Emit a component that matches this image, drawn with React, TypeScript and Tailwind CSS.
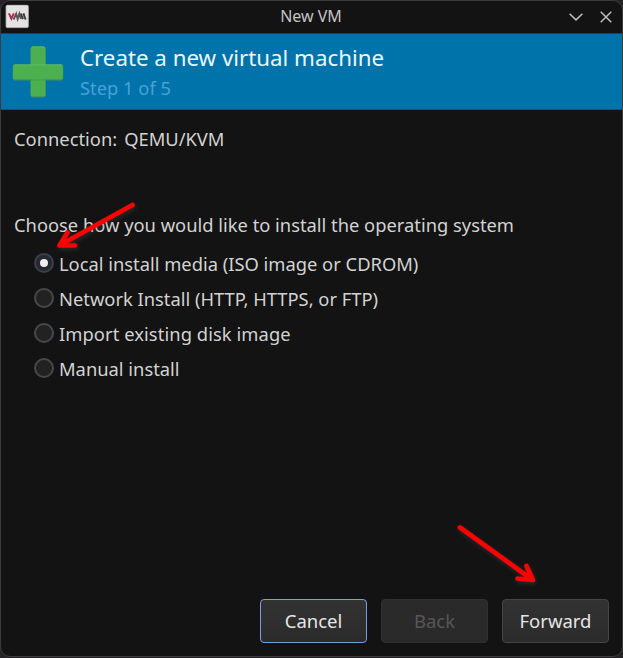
const options = [
  { label: "Local install media (ISO image or CDROM)", checked: true, tracking: "" },
  { label: "Network Install (HTTP, HTTPS, or FTP)", checked: false, tracking: "" },
  { label: "Import existing disk image", checked: false, tracking: "tracking-[0.08px]" },
  { label: "Manual install", checked: false, tracking: "" },
];

function VmLogo() {
  return (
    <svg width="24" height="24" viewBox="0 0 24 24" className="block">
      <rect x="1" y="0.6" width="22.4" height="22.6" rx="1.5" fill="#e4e2e3" stroke="#aaa8a9" strokeWidth="0.8" />
      <path d="M3.9 8.8 6.4 14.2 8.8 8.8" fill="none" stroke="#b52a50" strokeWidth="2" />
      <path d="M8.6 15 11.2 9.2 12.6 14.4 14.4 9.2 16 14.6" fill="none" stroke="#5a565b" strokeWidth="1.9" />
      <path d="M15.8 9 18 14.6M18.4 8.8 20.6 15" fill="none" stroke="#3f3c42" strokeWidth="2" />
    </svg>
  );
}

function PlusIcon() {
  return (
    <svg width="52" height="53" viewBox="0 0 52 53" className="block">
      <rect x="18.6" y="1.8" width="15" height="50" rx="2.2" fill="#35836f" />
      <rect x="0.8" y="19.5" width="50.3" height="15.3" rx="2.2" fill="#35836f" />
      <rect x="18.6" y="0.6" width="15" height="50" rx="2.2" fill="#4caf50" />
      <rect x="0.8" y="18.4" width="50.3" height="15.2" rx="2.2" fill="#4caf50" />
      <path d="M2 18.9H50M20 1H32.2" stroke="#62bb66" strokeWidth="0.9" />
      <path d="M18.6 34H33.6" stroke="#41984a" strokeWidth="0.9" />
    </svg>
  );
}

function Radio({ label, checked, tracking }: { label: string; checked: boolean; tracking: string }) {
  return (
    <label className="flex h-[35px] items-center">
      <span
        className={
          checked
            ? "flex size-[20px] items-center justify-center rounded-full border-2 border-[#3a404c] bg-[#252830]"
            : "size-[20px] rounded-full border-2 border-[#484848] bg-[#222222]"
        }
      >
        {checked && <span className="size-2 rounded-full bg-[#eeeeee]" />}
      </span>
      <span className={`ml-[5px] whitespace-nowrap pt-[2px] ${tracking}`}>{label}</span>
    </label>
  );
}

export default function App() {
  return (
    <div className="relative h-[658px] w-[623px] overflow-hidden bg-[#252326] font-['Noto_Sans',sans-serif] text-[18.34px] leading-[26px] text-[#d2d2d2]">
      <div className="flex h-[657px] w-[623px] flex-col overflow-hidden rounded-[10px] border border-[#3c3c3c] bg-[#131313]">
        <header className="flex h-[33px] shrink-0 items-center border-b border-[#3a3a3a] pl-1">
          <div className="w-[100px] -translate-y-[0.5px]"><VmLogo /></div>
          <div className="flex-1 pr-[7px] pb-[3px] text-center text-[16px] text-[#c4c4c4]">New VM</div>
          <div className="flex w-[98px] items-center justify-end gap-[17px] pr-[10px]">
            <svg width="14" height="8" viewBox="0 0 14 8" fill="none" stroke="#bdbdbd" strokeWidth="1.5"><path d="m.6.7 6.4 6.2L13.4.7" /></svg>
            <svg width="12" height="12" viewBox="0 0 12 12" fill="none" stroke="#bdbdbd" strokeWidth="1.5"><path d="m.7.7 10.6 10.6M11.3.7.7 11.3" /></svg>
          </div>
        </header>
        <section className="flex h-[76px] shrink-0 border-b border-[#454545] bg-[#0073aa] pl-[11px] pt-[12px]">
          <PlusIcon />
          <div className="ml-4 -mt-[4px]">
            <h1 className="h-[31px] whitespace-nowrap text-[22.3px] leading-[31px] text-[#edf5f9]">Create a new virtual machine</h1>
            <p className="h-[29px] leading-[29px] text-[#49a2d7]">Step 1 of 5</p>
          </div>
        </section>
        <main className="flex-1 pl-[13px] pt-[16px]">
          <p className="flex h-[26px] gap-[7px]"><span>Connection:</span><span>QEMU/KVM</span></p>
          <p className="mt-[60px] whitespace-nowrap">Choose how you would like to install the operating system</p>
          <div className="mt-[7px] pl-[20px]">
            {options.map((option) => <Radio key={option.label} {...option} />)}
          </div>
        </main>
        <footer className="flex h-[57px] shrink-0 items-start justify-end gap-[14px] pr-[13px]">
          <button className="h-[44px] w-[107px] rounded-[4px] border border-[#7a9fe0] bg-linear-to-b from-[#323232] to-[#2b2b2b] text-[18.5px] text-[#e5e5e5]">Cancel</button>
          <button disabled className="h-[44px] w-[107px] rounded-[4px] border border-[#303030] bg-[#2a2a2a] text-[18.5px] text-[#575757]">Back</button>
          <button className="h-[44px] w-[107px] rounded-[4px] border border-[#454545] bg-linear-to-b from-[#323232] to-[#2b2b2b] text-[18.5px] text-[#e5e5e5]">Forward</button>
        </footer>
      </div>
      <svg className="pointer-events-none absolute inset-0 drop-shadow-[1px_2px_2px_rgba(90,90,90,0.35)]" width="623" height="658" fill="none" stroke="#ff0000" strokeWidth="4.7" strokeLinecap="round" strokeLinejoin="round">
        <path d="M132.500 205 61 244.500M67.500 232.500 59.500 245.500 75 245.500" />
        <path d="M460 527.500 532 579.500M526.500 566 533 580 517.500 578.500" />
      </svg>
    </div>
  );
}
